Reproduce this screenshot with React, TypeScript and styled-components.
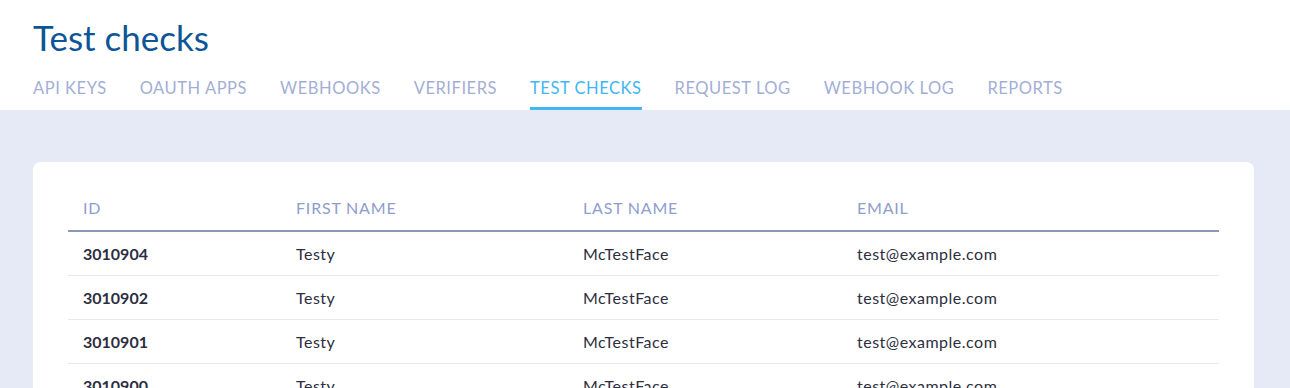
import React from "react"
import styled, { createGlobalStyle } from "styled-components"

const GlobalStyle = createGlobalStyle`
  html, body {
    margin: 0;
    padding: 0;
    background: #e6eaf6;
    font-family: Lato, "Open Sans", sans-serif;
  }
`

const Header = styled.header`
  background: #fff;
  padding: 0 33px;
`

const Title = styled.h1`
  margin: 0;
  padding-top: 16px;
  font-size: 35px;
  font-weight: 400;
  line-height: 42px;
  color: #0d5596;
`

const Tabs = styled.nav`
  display: flex;
  gap: 33px;
  margin-top: 20px;
`

const Tab = styled.a<{ $active?: boolean }>`
  display: block;
  font-size: 16.5px;
  line-height: 20px;
  padding-bottom: 9px;
  text-transform: uppercase;
  letter-spacing: 0.55px;
  color: ${ p => p.$active ? "#41b6f5" : "#a3aed6" };
  border-bottom: 3px solid ${ p => p.$active ? "#41b6f5" : "transparent" };
  cursor: pointer;
`

const Main = styled.main`
  padding: 52px 36px 0 33px;
`

const Card = styled.section`
  background: #fff;
  border-radius: 8px;
  padding: 24px 35px 0;
  height: 260px;
  overflow: hidden;
`

const Table = styled.table`
  width: 100%;
  border-collapse: collapse;
  table-layout: fixed;
`

const Th = styled.th<{ $w?: number }>`
  box-sizing: border-box;
  text-align: left;
  font-weight: 400;
  font-size: 16px;
  letter-spacing: 0.8px;
  text-transform: uppercase;
  color: #8f9dcc;
  padding: 12px 15px 13px;
  border-bottom: 2px solid #8c97b9;
  width: ${ p => p.$w ? `${ p.$w }px` : "auto" };
`

const Td = styled.td<{ $bold?: boolean }>`
  font-size: 16px;
  color: #2d2e40;
  font-weight: ${ p => p.$bold ? 700 : 400 };
  letter-spacing: ${ p => p.$bold ? 0 : 0.5 }px;
  padding: 0 15px;
  height: 43px;
  border-bottom: 1px solid #e6e8f3;
`

const tabs = ["API Keys", "OAuth Apps", "Webhooks", "Verifiers", "Test Checks", "Request Log", "Webhook Log", "Reports"]

const checks = [
  { id: "3010904", first: "Testy", last: "McTestFace", email: "test@example.com" },
  { id: "3010902", first: "Testy", last: "McTestFace", email: "test@example.com" },
  { id: "3010901", first: "Testy", last: "McTestFace", email: "test@example.com" },
  { id: "3010900", first: "Testy", last: "McTestFace", email: "test@example.com" },
]

const App = () => {
  return (
    <>
      <GlobalStyle />
      <Header>
        <Title>Test checks</Title>
        <Tabs>
          { tabs.map(t => (
            <Tab key={ t } $active={ t === "Test Checks" }>{ t }</Tab>
          )) }
        </Tabs>
      </Header>
      <Main>
        <Card>
          <Table>
            <thead>
              <tr>
                <Th $w={ 213 }>ID</Th>
                <Th $w={ 287 }>First name</Th>
                <Th $w={ 274 }>Last name</Th>
                <Th>Email</Th>
              </tr>
            </thead>
            <tbody>
              { checks.map(c => (
                <tr key={ c.id }>
                  <Td $bold>{ c.id }</Td>
                  <Td>{ c.first }</Td>
                  <Td>{ c.last }</Td>
                  <Td>{ c.email }</Td>
                </tr>
              )) }
            </tbody>
          </Table>
        </Card>
      </Main>
    </>
  )
}

export default App
